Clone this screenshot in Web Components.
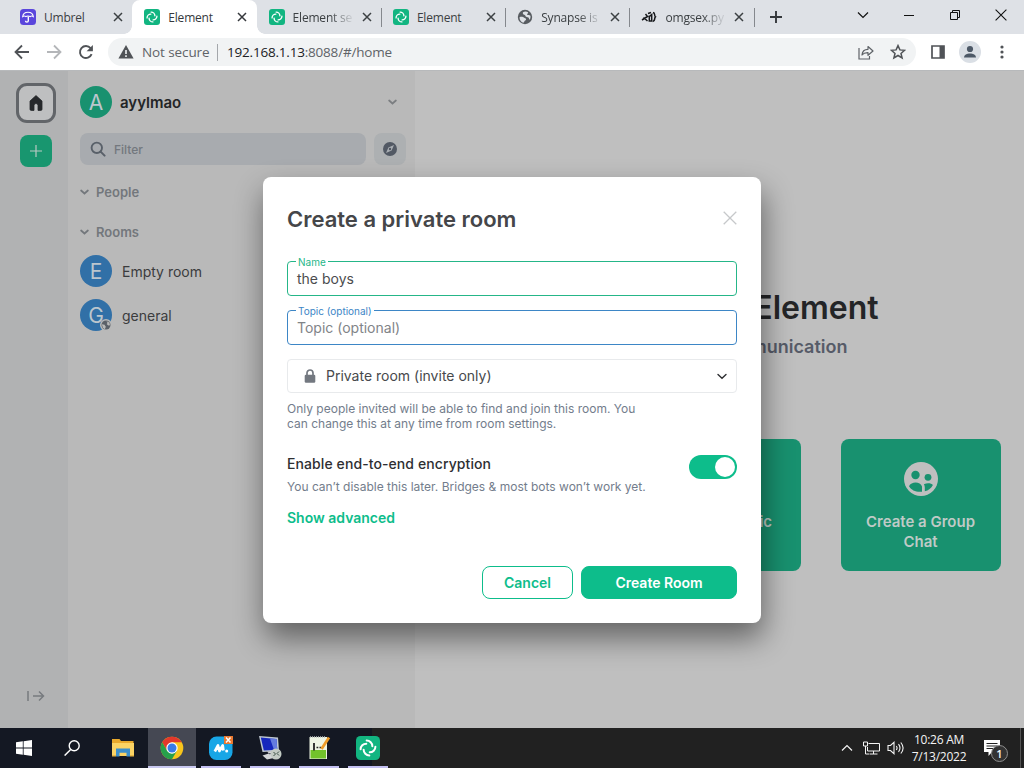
<!DOCTYPE html>
<html lang="en">
<head>
<meta charset="utf-8">
<title>Element</title>
<style>
    html, body {
        margin: 0;
        height: 768px;
        overflow: hidden;
    }
    body {
        width: 1024px;
        display: flex;
        flex-direction: column;
        font-family: Inter, "Liberation Sans", sans-serif;
    }
</style>
</head>
<body>
    <tab-strip>
        <browser-tab icon="umbrel">Umbrel</browser-tab>
        <browser-tab icon="element" active>Element</browser-tab>
        <browser-tab icon="element" fade divider>Element se</browser-tab>
        <browser-tab icon="element" divider>Element</browser-tab>
        <browser-tab icon="globe" fade divider>Synapse is</browser-tab>
        <browser-tab icon="gist" fade divider>omgsex.py</browser-tab>
    </tab-strip>
    <address-bar></address-bar>
    <chat-app></chat-app>
    <task-bar></task-bar>

<script>
// one arm of the logo, turned four times around the centre
const swirl = [0, 90, 180, 270].map(angle =>
    `<path d="M10.650 4.600a5.700 5.700 0 0 1 5.700 5.700" transform="rotate(${angle} 12 12)"/>`
).join('');

// name: [viewBox, markup]
const icons = {
    umbrel: ['0 0 16 16', '<rect width="16" height="16" rx="3.5" fill="#5a46dc"/><path d="M2.700 7.600C3 4.600 5.200 3.200 8 3.200s5 1.400 5.300 4.400c-1-.7-2.300-.7-3.200 0-1.200-.7-3-.7-4.200 0-.9-.7-2.200-.7-3.200 0z" fill="none" stroke="#fff" stroke-width="1.100"/><path d="M8.300 7.500v4.200a1.400 1.400 0 0 1-2.800 0" fill="none" stroke="#fff" stroke-width="1.400"/>'],
    element: ['0 0 24 24', '<rect width="24" height="24" rx="4.500" fill="#12b581"/><g fill="none" stroke="#fff" stroke-width="2" stroke-linecap="round">' + swirl + '</g>'],
    globe: ['0 0 16 16', '<circle cx="8" cy="8" r="7.200" fill="#585c61"/><path d="M2.500 8.200c1.500-.8 3.600-.6 4.400.4s2.300.7 2.200 1.800-1.400.9-1.700 1.900-.6 1.400-1.200 1.400C4 12.900 2.500 10.900 2.500 8.200zM6 3.200c1.500-.9 3.800-.8 5 .1.300 1.200-.7 1.200-.9 2s1 .8 1.900.6l1.400.8c.3 1.300 0 3-.8 4-.7-.4-.4-1.700-1.200-2.300S8.500 8 8.400 6.900s-1-.8-1.700-1.300S5.500 4 6 3.200z" fill="#dee1e6"/>'],
    gist: ['0 0 16 16', '<g fill="none" stroke="#16181b" stroke-width="1.500"><path d="M1 11l5.500-3.500-2-2.500M2.500 8.500L6.500 12M7 4.500l3-1M8.300 6.500v5.500h2.400V5.500l-2.400 2"/><path d="M12 3.500c2.600.3.900 3.300 2.400 4.300-1.500 1.200.4 4.200-2.700 4.700"/></g>'],
    close: ['0 0 10 10', '<path d="M1 1l8 8M9 1L1 9" stroke="currentColor" stroke-width="1.500" fill="none"/>'],
    thinClose: ['0 0 12 12', '<path d="M.6.6l10.800 10.800M11.400.6L.6 11.400" stroke="currentColor" stroke-width="1.100" fill="none"/>'],
    plus: ['0 0 12 12', '<path d="M6 0v12M0 6h12" stroke="currentColor" stroke-width="1.900"/>'],
    thinPlus: ['0 0 12 12', '<path d="M6 0v12M0 6h12" stroke="currentColor" stroke-width="1.200"/>'],
    chevron: ['0 0 12 8', '<path d="M1 1.500l5 5 5-5" fill="none" stroke="currentColor" stroke-width="1.200"/>'],
    boldChevron: ['0 0 12 8', '<path d="M1.500 2L6 6l4.500-4" fill="none" stroke="currentColor" stroke-width="2.300" stroke-linecap="round"/>'],
    selectChevron: ['0 0 10 7', '<path d="M1 1.500l4 3.700 4-3.700" fill="none" stroke="#2e2f32" stroke-width="1.400" stroke-linecap="round"/>'],
    minimize: ['0 0 10 10', '<path d="M0 5.500h10" stroke="#111"/>'],
    restore: ['0 0 10 10', '<path d="M.5 2.500h7v7h-7zM2.500 2.500v-2h7v7h-2" fill="none" stroke="#111"/>'],
    back: ['0 0 16 16', '<path d="M15 8H2M8 1.500L1.500 8 8 14.500" fill="none" stroke="currentColor" stroke-width="1.800"/>'],
    forward: ['0 0 16 16', '<path d="M1 8h13M8 1.500L14.500 8 8 14.500" fill="none" stroke="currentColor" stroke-width="1.800"/>'],
    reload: ['0 0 16 16', '<path d="M13.600 10.200A6 6 0 1 1 12.600 4.200L14 5.600" fill="none" stroke="currentColor" stroke-width="1.900"/><path d="M14.900.9v6.300H8.600z" fill="currentColor"/>'],
    warning: ['0 0 16 14', '<path d="M8 0l7.600 13.500H.4z" fill="#505357"/><path d="M8 5v4M8 10.200v1.700" stroke="#f1f3f4" stroke-width="1.600"/>'],
    share: ['0 0 16 16', '<path d="M1 4v11h10.500v-3" fill="none" stroke="#5f6368" stroke-width="1.200"/><path d="M4 11c.3-4 2.700-5.700 6-5.700V2.500L15 7l-5 4.300V8.600C7.500 8.500 5.500 9 4 11z" fill="none" stroke="#5f6368" stroke-width="1.200" stroke-linejoin="round"/>'],
    star: ['0 0 16 16', '<path d="M8 1.600l1.900 4.300 4.700.4-3.600 3.100 1.100 4.600L8 11.500 3.900 14 5 9.400 1.400 6.300l4.700-.4z" fill="none" stroke="#505357" stroke-width="1.500"/>'],
    panel: ['0 0 14 14', '<path d="M1 1h12v12H1z" fill="none" stroke="#505357" stroke-width="1.700"/><path d="M8.500 1H13v12H8.500z" fill="#505357"/>'],
    person: ['0 0 22 22', '<circle cx="11" cy="11" r="11" fill="#dadfe5"/><circle cx="11" cy="8" r="3.100" fill="#4d5967"/><path d="M5 16.500c0-5.500 12-5.500 12 0z" fill="#4d5967"/>'],
    dots: ['0 0 4 14', '<g fill="#505357"><circle cx="2" cy="2" r="1.600"/><circle cx="2" cy="7" r="1.600"/><circle cx="2" cy="12" r="1.600"/></g>'],
    home: ['0 0 16 16', '<path d="M8 .6L14 6v8.200c0 .8-.4 1.200-1.200 1.200H10V10.500a2 2 0 0 0-4 0v4.900H3.200c-.8 0-1.200-.4-1.200-1.200V6z" fill="#26282b" stroke="#26282b" stroke-width=".8" stroke-linejoin="round"/>'],
    search: ['0 0 16 16', '<circle cx="6.800" cy="6.800" r="5.200" fill="none" stroke="#596069" stroke-width="1.900"/><path d="M10.600 10.600L14.600 14.600" stroke="#596069" stroke-width="2" stroke-linecap="round"/>'],
    compass: ['0 0 14 14', '<circle cx="7" cy="7" r="7" fill="#525964"/><path d="M11 3L8.600 8.600 3 11l2.400-5.600z" fill="#a9aeb3"/><circle cx="7" cy="7" r="1.200" fill="#525964"/>'],
    expand: ['0 0 18 12', '<path d="M1 1v10M6 6h10.500M12 1.500L16.500 6 12 10.500" fill="none" stroke="#777b7f" stroke-width="1.500"/>'],
    group: ['0 0 34 34', '<circle cx="17" cy="17" r="17" fill="#bfbfbf"/><g fill="#18916f"><circle cx="11.500" cy="13" r="4.200"/><circle cx="24" cy="15.300" r="3.400"/><path d="M5 24.200c2.300-5 11.500-4.800 13 .3v5.200C12.500 30.500 7.500 28.300 5 24.200zM20.800 29.300v-3.800c0-1.300-.3-2.300-.9-3.300 3.500-1.500 7.500-1 9 .8-1.600 3.200-4.500 5.500-8.100 6.300z"/></g>'],
    lock: ['0 0 12 14', '<path d="M3 6.500V4a3 3 0 0 1 6 0v2.500" fill="none" stroke="#737880" stroke-width="1.700"/><rect x=".7" y="5.800" width="10.600" height="8" rx="1.300" fill="#737880"/>'],
    badge: ['0 0 12 12', '<circle cx="6" cy="6" r="6" fill="#b9b9b9"/><circle cx="6" cy="6" r="4.500" fill="#5b6068"/><path d="M1.800 5.200l2.700.6 1.300 1.900-.9 2.500L3 9zM6.500 2.200l1 1.700-.8 1.200 1.500 1.500 1.800-.4-.6-2.700z" fill="#b9b9b9"/>'],
    windows: ['0 0 16 16', '<path d="M0 2.300L6.800 1.300v6.200H0zM7.600 1.200L16 0v7.500H7.600zM0 8.400h6.800v6.300L0 13.700zM7.600 8.400H16V16l-8.400-1.200z" fill="#fff"/>'],
    winSearch: ['0 0 16 16', '<circle cx="10.200" cy="5.800" r="5" fill="none" stroke="#fff" stroke-width="1.400"/><path d="M6.700 9.500L.6 15.600" stroke="#fff" stroke-width="1.400"/>'],
    folder: ['0 0 22 20', '<path d="M0 1h7.500l1.500 2h12.500v15H0z" fill="#e9a92c"/><path d="M0 5h22v13H0z" fill="#fbd364"/><path d="M4 18.500v-8h14v8h-3.500v-3.700h-7v3.700z" fill="#3c8fcb"/><path d="M0 17h4v1.500H0zM18 17h4v1.500h-4z" fill="#e7b544"/>'],
    chrome: ['0 0 24 24', '<circle cx="12" cy="12" r="11.300" fill="#f8c51c"/><path d="M2.200 6.350A11.300 11.300 0 0 1 21.800 6.350H12L7.100 14.800z" fill="#e2382b"/><path d="M2.200 6.350A11.300 11.300 0 0 0 12 23.300L16.900 14.800 12 17.600 7.100 14.800z" fill="#26a04b"/><circle cx="12" cy="12" r="5.700" fill="#fff"/><circle cx="12" cy="12" r="4.500" fill="#397be8"/>'],
    moba: ['0 0 24 24', '<rect y=".5" width="23.500" height="23.500" rx="7.500" fill="#18a6e6"/><path d="M5.800 15.500L9 9.500l1.400 5.500L13.700 9.500l.7 5" fill="none" stroke="#fff" stroke-width="2.700" stroke-linejoin="round"/><circle cx="17.700" cy="15" r="1.500" fill="#fff"/><path d="M15 0h9v8h-9z" fill="#e97830"/><path d="M17 1.500l4.500 5M21.500 1.500l-4.500 5" stroke="#fff" stroke-width="1.500"/>'],
    remote: ['0 0 24 24', '<path d="M1 0l19 1.500 1 13.500L4.500 16z" fill="#bfc8d2"/><path d="M2.800 1.500L18.500 3l.8 10.700L5.800 14.500z" fill="#1728bd"/><path d="M12 2.400l6.500.6.8 10.700-3.300.2z" fill="#647be0"/><path d="M9 15.500l3 3 2-3.500zM4.500 19.500l9.500-3 4 5L9 23.500z" fill="#d3d5d7"/><circle cx="18" cy="18" r="5.500" fill="#c3cbc4"/><path d="M15.500 16l2 2-2 2M21 15.500l-2 2 2 2" fill="none" stroke="#3b5044"/>'],
    notepad: ['0 0 24 24', '<path d="M2.500 1H20v22H2.500z" fill="#eef4e4"/><path d="M3.500 14H19v8.500H3.500z" fill="#72c32b"/><path d="M7 7v7.500" stroke="#222" stroke-width="1.800"/><path d="M9.500 11.500h1.800M12.500 11.500h1.800" stroke="#222" stroke-width="1.700"/><path d="M14.500 13L22 1.500" stroke="#ee9b28" stroke-width="2.800"/><path d="M3 1h16" stroke="#b6bcbc" stroke-width="1.500" stroke-dasharray="1 1"/>'],
    network: ['0 0 17 14', '<g fill="none" stroke="#f4f4f4"><path d="M5.500 2.500h11v7.500h-12V6M10.500 10v3M7 13h7.500"/><path d="M.5 1h4v4h-4zM2.500 5v8h4"/></g>'],
    sound: ['0 0 18 14', '<g fill="none" stroke="#f4f4f4" stroke-width="1.100"><path d="M1 4.500h2.500L7 1.300v11.400L3.500 9.500H1zM9.300 5q1.500 2 0 4M11.500 3.200q3 3.800 0 7.600M13.800 1.500q4.600 5.500 0 11"/></g>'],
    message: ['0 0 16 16', '<path d="M0 0h16v12H8l-3.500 4v-4H0z" fill="#fff"/><path d="M2.500 3.500h11M2.500 6h11M2.500 8.500h7" stroke="#222"/>']
};

class ShadowElement extends HTMLElement {
    constructor() {
        super();
        this.attachShadow({ mode: 'open' });
    }

    connectedCallback() {
        this.shadowRoot.innerHTML = this.render();
    }
}

class UiIcon extends ShadowElement {
    render() {
        const [box, markup] = icons[this.getAttribute('name')];
        const w = this.getAttribute('w');
        const h = this.getAttribute('h') || w;
        return `
            <style>
                :host { display: block; flex: none; width: ${w}px; height: ${h}px; }
                svg { display: block; }
            </style>
            <svg width="${w}" height="${h}" viewBox="${box}">${markup}</svg>
        `;
    }
}

class TabStrip extends ShadowElement {
    render() {
        return `
            <style>
                :host {
                    display: flex;
                    height: 34px;
                    padding-left: 8px;
                    background: #dee1e6;
                    color: #3c4043;
                    flex: none;
                    font-family: "Open Sans", sans-serif;
                }
                .add { padding: 11px 0 0 16px; color: #35383c; flex: 1; }
                .controls { display: flex; color: #111; }
                .controls div { width: 46px; height: 29px; display: flex; align-items: center; justify-content: center; }
            </style>
            <slot></slot>
            <div class="add"><ui-icon name="plus" w="12"></ui-icon></div>
            <div class="controls">
                <div><ui-icon name="chevron" w="12" h="8"></ui-icon></div>
                <div><ui-icon name="minimize" w="10"></ui-icon></div>
                <div><ui-icon name="restore" w="10"></ui-icon></div>
                <div><ui-icon name="thinClose" w="12"></ui-icon></div>
            </div>
        `;
    }
}

class BrowserTab extends ShadowElement {
    render() {
        return `
            <style>
                :host {
                    display: flex;
                    align-items: center;
                    box-sizing: border-box;
                    width: 124.3px;
                    height: 34px;
                    padding: 0 9px 0 12px;
                    font-size: 12px;
                    position: relative;
                }
                :host([active]) { background: #fff; border-radius: 8px 8px 0 0; color: #35383c; }
                :host([active])::before, :host([active])::after {
                    content: "";
                    position: absolute;
                    bottom: 0;
                    width: 8px;
                    height: 8px;
                }
                :host([active])::before { left: -8px; background: radial-gradient(circle at 0 0, transparent 7.5px, #fff 8px); }
                :host([active])::after { right: -8px; background: radial-gradient(circle at 100% 0, transparent 7.5px, #fff 8px); }
                :host([divider])::after {
                    content: "";
                    position: absolute;
                    right: -1px;
                    top: 8px;
                    width: 1px;
                    height: 19px;
                    background: #85888d;
                }
                span { margin-left: 8px; width: 60px; overflow: hidden; white-space: nowrap; flex: none; letter-spacing: -.2px; }
                :host([fade]) span { mask-image: linear-gradient(90deg, #000 62%, rgba(0,0,0,.15) 96%); }
                .close { margin-left: 9px; }
            </style>
            <ui-icon name="${this.getAttribute('icon')}" w="16"></ui-icon>
            <span><slot></slot></span>
            <ui-icon class="close" name="close" w="10"></ui-icon>
        `;
    }
}

class AddressBar extends ShadowElement {
    render() {
        return `
            <style>
                :host {
                    display: flex;
                    align-items: center;
                    box-sizing: border-box;
                    height: 37px;
                    flex: none;
                    padding: 0 20px 0 14px;
                    background: #fff;
                    border-bottom: 1px solid #b7b9bb;
                    color: #505357;
                    font: 14px "Open Sans", sans-serif;
                }
                .nav { display: flex; gap: 16px; width: 94px; }
                .omnibox {
                    display: flex;
                    align-items: center;
                    box-sizing: border-box;
                    width: 808px;
                    height: 28px;
                    padding: 0 10px;
                    border-radius: 14px;
                    background: #f1f3f4;
                }
                .status { margin-left: 8px; width: 67px; font-size: 13.5px; letter-spacing: -.1px; white-space: nowrap; color: #5f6368; }
                .line { width: 1px; height: 17px; margin: 0 9px 0 8px; background: #a4a7ab; }
                .url { flex: 1; font-size: 13.5px; color: #5f6368; letter-spacing: -.2px; }
                .url b { font-weight: 400; color: #202124; }
                .actions { display: flex; gap: 16px; }
                .tools { display: flex; align-items: center; margin-left: 15px; flex: 1; }
            </style>
            <div class="nav">
                <ui-icon name="back" w="16"></ui-icon>
                <ui-icon name="forward" w="16" style="color:#b4b6b9"></ui-icon>
                <ui-icon name="reload" w="16"></ui-icon>
            </div>
            <div class="omnibox">
                <ui-icon name="warning" w="16" h="14"></ui-icon>
                <div class="status">Not secure</div>
                <div class="line"></div>
                <div class="url"><b>192.168.1.13</b>:8088/#/home</div>
                <div class="actions">
                    <ui-icon name="share" w="16"></ui-icon>
                    <ui-icon name="star" w="16"></ui-icon>
                </div>
            </div>
            <div class="tools">
                <ui-icon name="panel" w="14"></ui-icon>
                <ui-icon name="person" w="22" style="margin-left:14px"></ui-icon>
                <ui-icon name="dots" w="4" h="14" style="margin-left:19px"></ui-icon>
            </div>
        `;
    }
}

class ChatApp extends ShadowElement {
    render() {
        return `
            <style>
                :host { display: flex; flex: 1; position: relative; overflow: hidden; background: #bfbfbf; }
                .overlay {
                    position: absolute;
                    inset: 1px 0 0;
                    display: flex;
                    align-items: center;
                    justify-content: center;
                }
            </style>
            <space-rail></space-rail>
            <room-list></room-list>
            <home-page></home-page>
            <div class="overlay"><create-room-dialog></create-room-dialog></div>
        `;
    }
}

class SpaceRail extends ShadowElement {
    render() {
        return `
            <style>
                :host {
                    display: flex;
                    flex-direction: column;
                    align-items: center;
                    box-sizing: border-box;
                    width: 68px;
                    padding: 12px 0 26px 4px;
                    background: #b1b2b3;
                }
                div { display: flex; align-items: center; justify-content: center; box-sizing: border-box; }
                .home { width: 40px; height: 40px; border: 3px solid #626569; border-radius: 11px; background: #bebfc0; }
                .add { width: 32px; height: 32px; margin-top: 12px; border-radius: 8px; background: #18966f; color: #b9c9c3; }
                .expand { margin-top: auto; }
            </style>
            <div class="home"><ui-icon name="home" w="16"></ui-icon></div>
            <div class="add"><ui-icon name="thinPlus" w="12"></ui-icon></div>
            <div class="expand"><ui-icon name="expand" w="18" h="12"></ui-icon></div>
        `;
    }
}

class LetterAvatar extends ShadowElement {
    render() {
        return `
            <style>
                :host {
                    display: flex;
                    align-items: center;
                    justify-content: center;
                    position: relative;
                    flex: none;
                    width: 32px;
                    height: 32px;
                    border-radius: 50%;
                    background: #3170a7;
                    color: #bcc6cd;
                    font-size: 21px;
                    font-weight: 400;
                }
                .badge { position: absolute; right: 0; bottom: 0; }
            </style>
            <slot></slot>
            ${this.hasAttribute('public') ? '<ui-icon class="badge" name="badge" w="12"></ui-icon>' : ''}
        `;
    }
}

class RoomList extends ShadowElement {
    render() {
        return `
            <style>
                :host {
                    display: flex;
                    flex-direction: column;
                    box-sizing: border-box;
                    width: 347px;
                    padding: 15px 9px 0 12px;
                    background: #b9b9b9;
                    color: #3b3c3e;
                }
                .user { display: flex; align-items: center; gap: 8px; font-size: 15px; font-weight: 600; color: #242527; }
                .user .menu { margin-left: auto; margin-right: 9px; color: #7b7e81; }
                .search { display: flex; gap: 8px; margin-top: 15px; }
                .filter {
                    display: flex;
                    align-items: center;
                    gap: 8px;
                    width: 276px;
                    height: 32px;
                    padding-left: 10px;
                    border-radius: 8px;
                    background: #a8abaf;
                    font-size: 12px;
                    font-weight: 500;
                    color: #73787e;
                }
                .explore {
                    display: flex;
                    align-items: center;
                    justify-content: center;
                    width: 32px;
                    border-radius: 8px;
                    background: #adb0b2;
                }
                h3 {
                    display: flex;
                    align-items: center;
                    gap: 7px;
                    margin: 0;
                    height: 20px;
                    font-size: 13px;
                    font-weight: 600;
                    color: #73777c;
                }
                h3 ui-icon { margin: 0 0 1px 0; }
                h3.people { margin-top: 17px; }
                h3.rooms { margin-top: 20px; }
                .room { display: flex; align-items: center; gap: 10px; margin-top: 12px; font-size: 14px; }
                h3.rooms + .room { margin-top: 13px; }
            </style>
            <div class="user">
                <letter-avatar style="background:#18916f">A</letter-avatar>
                <span>ayylmao</span>
                <ui-icon class="menu" name="boldChevron" w="9" h="6"></ui-icon>
            </div>
            <div class="search">
                <div class="filter"><ui-icon name="search" w="16"></ui-icon>Filter</div>
                <div class="explore"><ui-icon name="compass" w="14"></ui-icon></div>
            </div>
            <h3 class="people"><ui-icon name="boldChevron" w="9" h="6"></ui-icon>People</h3>
            <h3 class="rooms"><ui-icon name="boldChevron" w="9" h="6"></ui-icon>Rooms</h3>
            <div class="room"><letter-avatar>E</letter-avatar>Empty room</div>
            <div class="room"><letter-avatar public>G</letter-avatar>general</div>
        `;
    }
}

class HomePage extends ShadowElement {
    render() {
        return `
            <style>
                :host {
                    display: flex;
                    flex-direction: column;
                    align-items: center;
                    flex: 1;
                    padding-left: 1px;
                    margin-right: -1px;
                    background: #bfbfbf;
                }
                h1 { margin: 217px 0 0; font-size: 32px; line-height: 40px; font-weight: 600; color: #242527; white-space: nowrap; }
                h2 { margin: 6px 0 0; font-size: 18px; line-height: 26px; font-weight: 600; color: #565b68; white-space: nowrap; }
                .actions { display: flex; gap: 40px; margin-top: 79px; }
            </style>
            <h1>Welcome to Element</h1>
            <h2>Liberate your communication</h2>
            <div class="actions">
                <home-action>Send a Direct Message</home-action>
                <home-action>Explore Public Rooms</home-action>
                <home-action icon="group">Create a Group Chat</home-action>
            </div>
        `;
    }
}

class HomeAction extends ShadowElement {
    render() {
        const icon = this.getAttribute('icon');
        return `
            <style>
                :host {
                    display: flex;
                    flex-direction: column;
                    align-items: center;
                    box-sizing: border-box;
                    width: 160px;
                    height: 132px;
                    padding: 23px 20px 0;
                    border-radius: 8px;
                    background: #18916f;
                    color: #bfcac6;
                    font-size: 15px;
                    font-weight: 600;
                    line-height: 20px;
                    text-align: center;
                }
                .icon { height: 50px; }
            </style>
            <div class="icon">${icon ? `<ui-icon name="${icon}" w="34"></ui-icon>` : ''}</div>
            <div><slot></slot></div>
        `;
    }
}

class TextField extends ShadowElement {
    render() {
        return `
            <style>
                :host {
                    display: flex;
                    align-items: center;
                    position: relative;
                    box-sizing: border-box;
                    height: 35px;
                    padding: 0 9px 1px;
                    border: 1px solid var(--accent);
                    border-radius: 4px;
                    font-size: 14px;
                    color: #4b4c4e;
                }
                label {
                    position: absolute;
                    left: 8px;
                    top: -6px;
                    padding: 0 2px;
                    background: #fff;
                    color: var(--accent);
                    font-size: 10px;
                    line-height: 12px;
                }
            </style>
            <label>${this.getAttribute('label')}</label>
            <slot></slot>
        `;
    }
}

class ToggleSwitch extends ShadowElement {
    render() {
        return `
            <style>
                :host {
                    display: flex;
                    justify-content: flex-end;
                    box-sizing: border-box;
                    width: 48px;
                    height: 24px;
                    padding: 2px;
                    border-radius: 12px;
                    background: #0dbd8b;
                }
                div { width: 20px; height: 20px; border-radius: 50%; background: #fff; }
            </style>
            <div></div>
        `;
    }
}

class PillButton extends ShadowElement {
    render() {
        return `
            <style>
                :host { display: block; }
                button {
                    width: 100%;
                    height: 33px;
                    padding: 0;
                    border: 1px solid #0dbd8b;
                    border-radius: 8px;
                    background: #fff;
                    color: #0dbd8b;
                    font: 600 14px Inter, sans-serif;
                }
                :host([primary]) button { background: #0dbd8b; color: #fff; }
            </style>
            <button><slot></slot></button>
        `;
    }
}

class CreateRoomDialog extends ShadowElement {
    render() {
        return `
            <style>
                :host {
                    display: block;
                    box-sizing: border-box;
                    width: 498px;
                    height: 446px;
                    padding: 24px;
                    border-radius: 8px;
                    background: #fff;
                    box-shadow: 2px 15px 30px 0 rgba(0, 0, 0, .48);
                    color: #2e2f32;
                }
                header { display: flex; justify-content: space-between; align-items: center; height: 36px; }
                h2 { margin: 0; font-size: 22px; font-weight: 600; color: #454649; }
                header ui-icon { color: #c6c8ca; margin-top: -2px; }
                text-field { --accent: #25b688; margin-top: 24px; }
                text-field + text-field { --accent: #3d86c6; margin-top: 14px; color: #818488; }
                .select {
                    display: flex;
                    align-items: center;
                    box-sizing: border-box;
                    height: 34px;
                    margin-top: 14px;
                    padding: 0 9px 0 16px;
                    border: 1px solid #e8eaec;
                    border-radius: 4px;
                    font-size: 14px;
                    color: #47494c;
                }
                .select span { flex: 1; margin-left: 10px; padding-bottom: 1px; }
                p { margin: 0; font-size: 12px; line-height: 15px; color: #737d8c; }
                .hint { width: 370px; margin-top: 8px; }
                .encrypt { display: flex; justify-content: space-between; margin-top: 24px; height: 24px; }
                .encrypt span { margin-top: -1px; font-size: 14px; font-weight: 500; line-height: 19px; letter-spacing: .09px; }
                .advanced { margin-top: 14px; font-size: 14px; font-weight: 600; line-height: 20px; color: #0dbd8b; }
                footer { display: flex; justify-content: flex-end; gap: 8px; margin-top: 38px; }
            </style>
            <header>
                <h2>Create a private room</h2>
                <ui-icon name="thinClose" w="14"></ui-icon>
            </header>
            <text-field label="Name">the boys</text-field>
            <text-field label="Topic (optional)">Topic (optional)</text-field>
            <div class="select">
                <ui-icon name="lock" w="12" h="14"></ui-icon>
                <span>Private room (invite only)</span>
                <ui-icon name="selectChevron" w="10" h="7"></ui-icon>
            </div>
            <p class="hint">Only people invited will be able to find and join this room. You<br>can change this at any time from room settings.</p>
            <div class="encrypt">
                <span>Enable end-to-end encryption</span>
                <toggle-switch></toggle-switch>
            </div>
            <p>You can’t disable this later. Bridges &amp; most bots won’t work yet.</p>
            <div class="advanced">Show advanced</div>
            <footer>
                <pill-button style="width:91px">Cancel</pill-button>
                <pill-button primary style="width:156px">Create Room</pill-button>
            </footer>
        `;
    }
}

class TaskBar extends ShadowElement {
    render() {
        return `
            <style>
                :host {
                    display: flex;
                    flex: none;
                    height: 40px;
                    background: linear-gradient(90deg, #141823 0 372px, #212121 372px);
                    color: #f4f4f4;
                    font: 12px/17px "Open Sans", sans-serif;
                }
                .apps { display: flex; gap: 1px; flex: 1; }
                .apps div {
                    display: flex;
                    align-items: center;
                    justify-content: center;
                    box-sizing: border-box;
                    width: 48px;
                    border: solid transparent;
                    border-width: 2px 0;
                    background-clip: padding-box;
                }
                .apps .search { margin: 0 2px 0 -1px; }
                .apps .open { background: linear-gradient(#c3c0f2, #c3c0f2) bottom / 40px 2px no-repeat border-box; }
                .apps .current { background: linear-gradient(#c8c8f0, #c8c8f0) bottom / 48px 2px no-repeat border-box, #454853 border-box; }
                .tray { display: flex; align-items: center; }
                .clock { width: 56px; margin-left: 6px; text-align: center; letter-spacing: -.25px; white-space: nowrap; }
                .notice { position: relative; margin-left: 17px; width: 16px; }
                .notice span {
                    position: absolute;
                    left: 7px;
                    top: 5px;
                    width: 15px;
                    height: 15px;
                    border: 1px solid #8e8e8e;
                    border-radius: 50%;
                    background: #333;
                    font-size: 11px;
                    font-weight: 600;
                    line-height: 15px;
                    text-align: center;
                }
                .edge { width: 1px; height: 40px; margin: 0 3px 0 20px; background: #545454; }
            </style>
            <div class="apps">
                <div><ui-icon name="windows" w="16"></ui-icon></div>
                <div class="search"><ui-icon name="winSearch" w="16"></ui-icon></div>
                <div><ui-icon name="folder" w="22" h="20"></ui-icon></div>
                <div class="current"><ui-icon name="chrome" w="24"></ui-icon></div>
                <div class="open"><ui-icon name="moba" w="24"></ui-icon></div>
                <div class="open"><ui-icon name="remote" w="24"></ui-icon></div>
                <div class="open"><ui-icon name="notepad" w="24"></ui-icon></div>
                <div class="open"><ui-icon name="element" w="24"></ui-icon></div>
            </div>
            <div class="tray">
                <ui-icon name="chevron" w="12" h="8" style="transform:scaleY(-1)"></ui-icon>
                <ui-icon name="network" w="17" h="14" style="margin-left:10px"></ui-icon>
                <ui-icon name="sound" w="18" h="14" style="margin-left:7px"></ui-icon>
                <div class="clock">10:26 AM<br>7/13/2022</div>
                <div class="notice"><ui-icon name="message" w="16"></ui-icon><span>1</span></div>
                <div class="edge"></div>
            </div>
        `;
    }
}

customElements.define('ui-icon', UiIcon);
customElements.define('tab-strip', TabStrip);
customElements.define('browser-tab', BrowserTab);
customElements.define('address-bar', AddressBar);
customElements.define('letter-avatar', LetterAvatar);
customElements.define('space-rail', SpaceRail);
customElements.define('room-list', RoomList);
customElements.define('home-action', HomeAction);
customElements.define('home-page', HomePage);
customElements.define('text-field', TextField);
customElements.define('toggle-switch', ToggleSwitch);
customElements.define('pill-button', PillButton);
customElements.define('create-room-dialog', CreateRoomDialog);
customElements.define('chat-app', ChatApp);
customElements.define('task-bar', TaskBar);
</script>
</body>
</html>
